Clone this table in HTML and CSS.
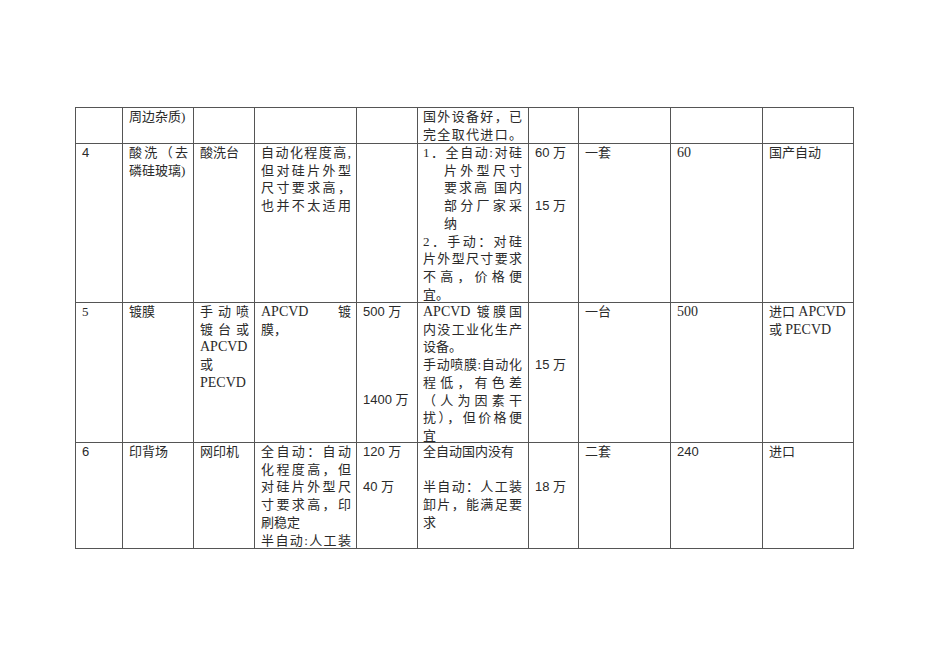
FILE: index.html
```html
<!DOCTYPE html>
<html lang="zh-CN">
<head>
<meta charset="utf-8">
<title>设备表</title>
<link rel="stylesheet" href="styles.css">
</head>
<body>
<div class="page">
  <div class="sheet">
    <!-- row 3 (continued) -->
    <div class="c"></div>
    <div class="c"><div>周边杂质)</div></div>
    <div class="c"></div>
    <div class="c"></div>
    <div class="c"></div>
    <div class="c c6"><div class="j">国外设备好，已</div><div class="j">完全取代进口。</div></div>
    <div class="c"></div>
    <div class="c"></div>
    <div class="c"></div>
    <div class="c"></div>

    <!-- row 4 -->
    <div class="c sans">4</div>
    <div class="c"><div class="j">酸洗（去</div><div>磷硅玻璃)</div></div>
    <div class="c"><div>酸洗台</div></div>
    <div class="c"><div class="j">自动化程度高,</div><div class="j">但对硅片外型</div><div class="j">尺寸要求高，</div><div class="j">也并不太适用</div></div>
    <div class="c"></div>
    <div class="c c6">
      <div class="j">1．全自动:对硅</div>
      <div class="j ind">片外型尺寸</div>
      <div class="j ind">要求高 国内</div>
      <div class="j ind">部分厂家采</div>
      <div class="ind">纳</div>
      <div class="j">2．手动：对硅</div>
      <div class="j">片外型尺寸要求</div>
      <div class="j">不高，价格便</div>
      <div>宜。</div>
    </div>
    <div class="c sans"><div>60 万</div><div class="gap"></div><div class="gap"></div><div>15 万</div></div>
    <div class="c"><div>一套</div></div>
    <div class="c"><div class="en">60</div></div>
    <div class="c"><div>国产自动</div></div>

    <!-- row 5 -->
    <div class="c">5</div>
    <div class="c"><div>镀膜</div></div>
    <div class="c"><div class="j">手动喷</div><div class="j">镀台或</div><div class="en">APCVD</div><div>或</div><div class="en">PECVD</div></div>
    <div class="c"><div class="j"><span class="en">APCVD</span> 镀</div><div>膜，</div></div>
    <div class="c sans"><div>500 万</div><div class="gap"></div><div class="gap"></div><div class="gap"></div><div class="gap"></div><div>1400 万</div></div>
    <div class="c c6">
      <div class="j"><span class="en">APCVD</span> 镀膜国</div>
      <div class="j">内没工业化生产</div>
      <div>设备。</div>
      <div class="j">手动喷膜:自动化</div>
      <div class="j">程低，有色差</div>
      <div class="j">（人为因素干</div>
      <div class="j">扰），但价格便</div>
      <div>宜</div>
    </div>
    <div class="c sans"><div class="gap"></div><div class="gap"></div><div class="gap"></div><div>15 万</div></div>
    <div class="c"><div>一台</div></div>
    <div class="c"><div class="en">500</div></div>
    <div class="c"><div>进口 <span class="en">APCVD</span></div><div>或 <span class="en">PECVD</span></div></div>

    <!-- row 6 -->
    <div class="c sans">6</div>
    <div class="c"><div>印背场</div></div>
    <div class="c"><div>网印机</div></div>
    <div class="c"><div class="j">全自动：自动</div><div class="j">化程度高，但</div><div class="j">对硅片外型尺</div><div class="j">寸要求高，印</div><div>刷稳定</div><div class="j">半自动:人工装</div></div>
    <div class="c sans"><div>120 万</div><div class="gap"></div><div>40 万</div></div>
    <div class="c c6">
      <div>全自动国内没有</div>
      <div class="gap"></div>
      <div class="j">半自动：人工装</div>
      <div class="j">卸片，能满足要</div>
      <div>求</div>
    </div>
    <div class="c sans"><div class="gap"></div><div class="gap"></div><div>18 万</div></div>
    <div class="c"><div>二套</div></div>
    <div class="c sans"><div>240</div></div>
    <div class="c"><div>进口</div></div>
  </div>
</div>
</body>
</html>
```

FILE: styles.css
```css
html, body {
  margin: 0;
  padding: 0;
  background: #ffffff;
}

.page {
  width: 950px;
  height: 672px;
  box-sizing: border-box;
  padding: 107px 0 0 75px;
  overflow: hidden;
}

.sheet {
  display: grid;
  grid-template-columns: 47px 71px 61px 102px 61px 111px 50px 92px 92px 91px;
  grid-template-rows: 36px 159px 140px 106px;
  width: max-content;
  border-top: 1px solid #555;
  border-left: 1px solid #555;
  font-family: "Liberation Serif", "Noto Sans CJK SC", serif;
  font-size: 13px;
  line-height: 17.7px;
  color: #2a2a2a;
}

.c {
  box-sizing: border-box;
  border-right: 1px solid #555;
  border-bottom: 1px solid #555;
  padding: 0 5px 0 6px;
  min-width: 0;
}

.c6 {
  padding-left: 5px;
  padding-right: 6px;
}

.sans {
  font-family: "Liberation Sans", "Noto Sans CJK SC", sans-serif;
}

.en {
  font-family: "Liberation Serif", serif;
  font-size: 14px;
}

.j {
  text-align: justify;
  text-align-last: justify;
  white-space: nowrap;
}

.ind {
  padding-left: 21px;
}

.gap {
  height: 17.7px;
}
```
